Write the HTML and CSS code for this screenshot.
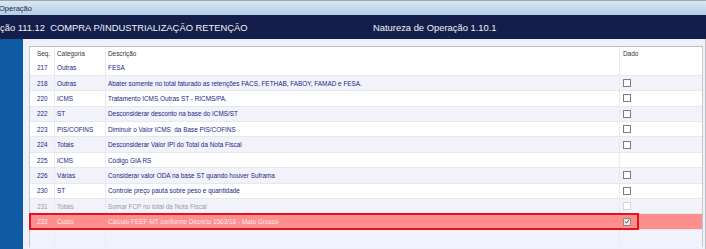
FILE: index.html
```html
<!DOCTYPE html>
<html lang="pt-BR">

<head>
    <meta charset="UTF-8">
    <title>Operação</title>
    <link rel="stylesheet" href="styles.css">
</head>

<body>
    <div class="window">
        <div class="caption">Operação</div>

        <!-- Cabeçalho da natureza -->
        <div class="banner">
            <span>ção 111.12&nbsp; COMPRA P/INDUSTRIALIZAÇÃO RETENÇÃO</span>
            <span>Natureza de Operação 1.10.1</span>
        </div>

        <div class="body">
            <div class="side"></div>
            <div class="main">
                <div class="grid">
                    <div class="row head">
                        <div class="c seq">Seq.</div>
                        <div class="c">Categoria</div>
                        <div class="c">Descrição</div>
                        <div class="c dado">Dado</div>
                    </div>
                    <div class="row first">
                        <div class="c seq">217</div>
                        <div class="c">Outras</div>
                        <div class="c">FESA</div>
                        <div class="c dado"></div>
                    </div>
                    <div class="row alt">
                        <div class="c seq">218</div>
                        <div class="c">Outras</div>
                        <div class="c">Abater somente no total faturado as retenções FACS, FETHAB, FABOY, FAMAD e FESA.</div>
                        <div class="c dado"><span class="check"></span></div>
                    </div>
                    <div class="row">
                        <div class="c seq">220</div>
                        <div class="c">ICMS</div>
                        <div class="c">Tratamento ICMS Outras ST - RICMS/PA.</div>
                        <div class="c dado"><span class="check"></span></div>
                    </div>
                    <div class="row alt">
                        <div class="c seq">222</div>
                        <div class="c">ST</div>
                        <div class="c">Desconsiderar desconto na base do ICMS/ST</div>
                        <div class="c dado"><span class="check"></span></div>
                    </div>
                    <div class="row">
                        <div class="c seq">223</div>
                        <div class="c">PIS/COFINS</div>
                        <div class="c">Diminuir o Valor ICMS&nbsp; da Base PIS/COFINS</div>
                        <div class="c dado"><span class="check"></span></div>
                    </div>
                    <div class="row alt">
                        <div class="c seq">224</div>
                        <div class="c">Totais</div>
                        <div class="c">Desconsiderar Valor IPI do Total da Nota Fiscal</div>
                        <div class="c dado"><span class="check"></span></div>
                    </div>
                    <div class="row">
                        <div class="c seq">225</div>
                        <div class="c">ICMS</div>
                        <div class="c">Código GIA RS</div>
                        <div class="c dado"></div>
                    </div>
                    <div class="row alt">
                        <div class="c seq">226</div>
                        <div class="c">Várias</div>
                        <div class="c">Considerar valor ODA na base ST quando houver Suframa</div>
                        <div class="c dado"><span class="check"></span></div>
                    </div>
                    <div class="row">
                        <div class="c seq">230</div>
                        <div class="c">ST</div>
                        <div class="c">Controle preço pauta sobre peso e quantidade</div>
                        <div class="c dado"><span class="check"></span></div>
                    </div>
                    <div class="row alt muted">
                        <div class="c seq">231</div>
                        <div class="c">Totais</div>
                        <div class="c">Somar FCP no total da Nota Fiscal</div>
                        <div class="c dado"><span class="check faint"></span></div>
                    </div>
                    <div class="row selected">
                        <div class="c seq">233</div>
                        <div class="c">Custo</div>
                        <div class="c">Cálculo FEEF-MT conforme Decreto 1563/18 - Mato Grosso</div>
                        <div class="c dado">
                            <span class="check checked">
                                <svg viewBox="0 0 8 8" width="7" height="7">
                                    <path d="M1.2 4.2 L3.1 6 L6.8 1.6" fill="none" stroke="#555" stroke-width="1.2" />
                                </svg>
                            </span>
                        </div>
                        <span class="sel-box"></span>
                    </div>
                    <div class="row alt empty">
                        <div class="c seq"></div>
                        <div class="c"></div>
                        <div class="c"></div>
                        <div class="c dado"></div>
                    </div>
                </div>
            </div>
        </div>
    </div>
</body>

</html>
```

FILE: styles.css
```css
/* Tela de natureza de operação */
body {
    margin: 0;
    font-family: "Liberation Sans", Arial, sans-serif;
    background: #ffffff;
}

.window {
    width: 706px;
    height: 249px;
    overflow: hidden;
    display: flex;
    flex-direction: column;
}

.caption {
    height: 15px;
    line-height: 15px;
    font-size: 7.5px;
    color: #1b2a3c;
    background: linear-gradient(#dbe7f4, #b3cde8);
    border-top: 1px solid #9aa6b4;
    box-sizing: border-box;
    margin-left: -1px;
}

.banner {
    height: 24px;
    display: grid;
    grid-template-columns: 373px 1fr;
    align-items: center;
    background: #131f4a;
    color: #f2f4f8;
    font-size: 9.4px;
}

.body {
    flex: 1;
    display: flex;
    min-height: 0;
}

.side {
    width: 23px;
    background: #0e5ba3;
}

.main {
    flex: 1;
    background: #eef1fb;
    padding: 7px 2px 2px 6px;
    display: flex;
    border-right: 1px solid #c2c2c2;
}

.grid {
    flex: 1;
    background: #ffffff;
    border: 1px solid #c8c8c8;
    border-top-color: #bdbdbd;
}

.row {
    display: grid;
    grid-template-columns: 25px 51px 514px 1fr;
    height: 15.4px;
    border-bottom: 1px solid #e6e8f0;
    box-sizing: border-box;
    font-size: 6.4px;
    color: #242488;
    position: relative;
}

.row.head {
    height: 13.5px;
    border-bottom: none;
    color: #333333;
}

.row.alt {
    background: #f1f2fa;
}

.c {
    display: flex;
    align-items: center;
    padding-left: 2px;
    border-right: 1px solid #e8eaf1;
    white-space: nowrap;
    overflow: hidden;
}

.c.seq {
    padding-left: 7px;
}

.c.dado {
    border-right: none;
    padding-left: 3px;
}

.check {
    width: 8px;
    height: 8px;
    border: 1px solid #7d7d7d;
    background: #ffffff;
    box-sizing: border-box;
    display: flex;
    align-items: center;
    justify-content: center;
}

.check.faint {
    border-color: #d6d6d6;
}

.check.checked {
    background: #e6e6e6;
    border-color: #8a8a8a;
}

.row.muted {
    color: #9a9aa6;
}

.row.selected {
    background: #ff8f8f;
    color: #ffeaea;
}

.row.selected .c {
    border-right-color: transparent;
}

.row.empty {
    border-bottom: none;
    height: 17px;
}

.sel-box {
    position: absolute;
    left: -1px;
    top: -1px;
    width: 610px;
    height: 17px;
    border: 2px solid #e3141e;
    box-sizing: border-box;
}
```
